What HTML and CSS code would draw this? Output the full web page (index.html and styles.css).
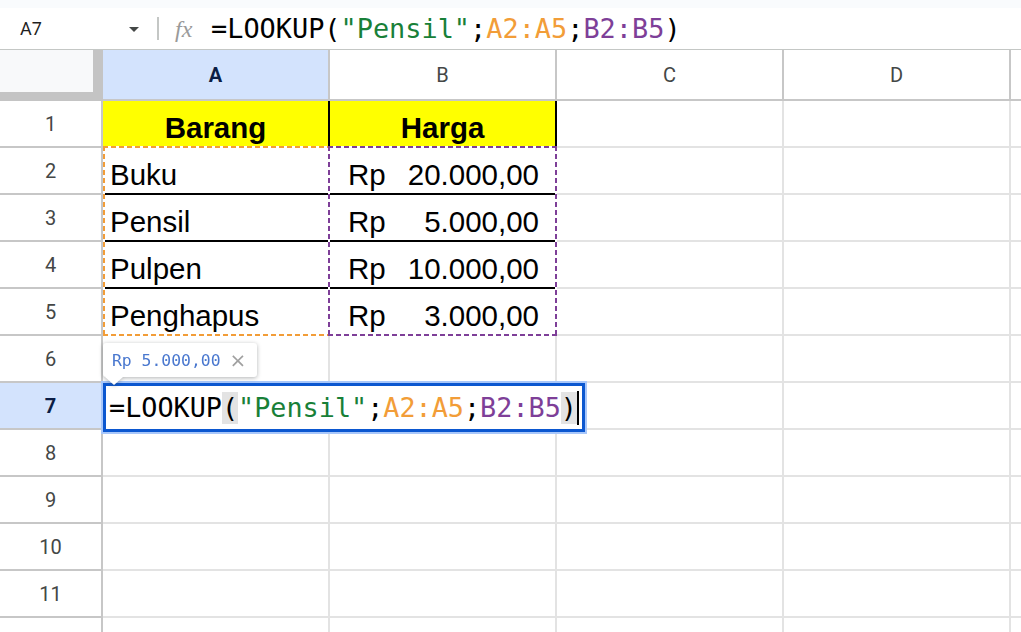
FILE: index.html
```html
<!DOCTYPE html>
<html lang="id">
<head>
<meta charset="utf-8">
<title>LOOKUP</title>
<link rel="stylesheet" href="styles.css">
</head>
<body>
<div class="topstrip"></div>
<div class="fbar">
  <div class="namebox">A7</div>
  <svg class="dd" width="12" height="6" viewBox="0 0 12 6"><path d="M1 0h10L6 5z" fill="#444746"/></svg>
  <div class="sep"></div>
  <span class="fx">fx</span>
  <div class="formula"><span>=LOOKUP(</span><span class="str">"Pensil"</span><span>;</span><span class="ra">A2:A5</span><span>;</span><span class="rb">B2:B5</span><span>)</span></div>
</div>
<div class="sheetwrap">
  <div class="sheet">
    <div class="corner"></div>
    <div class="ch sel">A</div><div class="ch">B</div><div class="ch">C</div><div class="ch">D</div><div class="ch"></div>

    <div class="rh">1</div><div class="c hd">Barang</div><div class="c hd">Harga</div><div class="c"></div><div class="c"></div><div class="c"></div>
    <div class="rh">2</div><div class="c tb">Buku</div><div class="c tb acc"><span>Rp</span><span>20.000,00</span></div><div class="c"></div><div class="c"></div><div class="c"></div>
    <div class="rh">3</div><div class="c tb">Pensil</div><div class="c tb acc"><span>Rp</span><span>5.000,00</span></div><div class="c"></div><div class="c"></div><div class="c"></div>
    <div class="rh">4</div><div class="c tb">Pulpen</div><div class="c tb acc"><span>Rp</span><span>10.000,00</span></div><div class="c"></div><div class="c"></div><div class="c"></div>
    <div class="rh">5</div><div class="c tb">Penghapus</div><div class="c tb acc"><span>Rp</span><span>3.000,00</span></div><div class="c"></div><div class="c"></div><div class="c"></div>
    <div class="rh">6</div><div class="c"></div><div class="c"></div><div class="c"></div><div class="c"></div><div class="c"></div>
    <div class="rh sel">7</div><div class="c"></div><div class="c"></div><div class="c"></div><div class="c"></div><div class="c"></div>
    <div class="rh">8</div><div class="c"></div><div class="c"></div><div class="c"></div><div class="c"></div><div class="c"></div>
    <div class="rh">9</div><div class="c"></div><div class="c"></div><div class="c"></div><div class="c"></div><div class="c"></div>
    <div class="rh">10</div><div class="c"></div><div class="c"></div><div class="c"></div><div class="c"></div><div class="c"></div>
    <div class="rh">11</div><div class="c"></div><div class="c"></div><div class="c"></div><div class="c"></div><div class="c"></div>
    <div class="rh"></div><div class="c"></div><div class="c"></div><div class="c"></div><div class="c"></div><div class="c"></div>
  </div>
  <div class="layer">
    <div class="rng rng-a"></div>
    <div class="rng rng-b"></div>
    <div class="editor"><span>=LOOKUP</span><span class="pm">(</span><span class="str">"Pensil"</span><span>;</span><span class="ra">A2:A5</span><span>;</span><span class="rb">B2:B5</span><span class="pm">)</span><span class="cur"></span></div>
    <div class="tip"><span class="tipval">Rp 5.000,00</span><span class="tipx">×</span></div>
  </div>
</div>
</body>
</html>
```
FILE: styles.css
```css
* { box-sizing: border-box; }
html, body { margin: 0; padding: 0; }
body {
  width: 1021px;
  height: 632px;
  overflow: hidden;
  background: #fff;
  font-family: Roboto, "Liberation Sans", sans-serif;
}
.topstrip { height: 8px; background: #f9fbfd; }
.fbar {
  height: 42px;
  border-bottom: 1px solid #c4c7c5;
  display: flex;
  align-items: center;
}
.namebox {
  width: 128px;
  padding-left: 20px;
  font-size: 18px;
  color: #1f1f1f;
}
.dd { display: block; margin-top: 2px; }
.sep {
  width: 2px;
  height: 23px;
  margin-left: 17px;
  background: #c4c7c5;
}
.fx {
  margin-left: 16px;
  width: 24px;
  font-family: "Liberation Serif", serif;
  font-style: italic;
  font-size: 24px;
  color: #9a9a9a;
  line-height: 1;
}
.formula {
  margin-left: 12px;
  font-family: "DejaVu Sans Mono", monospace;
  font-size: 26.9px;
  color: #000;
  white-space: nowrap;
}
.str { color: #188038; }
.ra { color: #f29d38; }
.rb { color: #7e3f98; }

.sheetwrap { display: grid; }
.sheet, .layer {
  grid-area: 1 / 1;
  display: grid;
  grid-template-columns: 103px repeat(4, 227px) 1fr;
  grid-template-rows: 51px repeat(12, 47px);
}
.layer { pointer-events: none; }

.corner {
  background: #f8f9fa;
  border-right: 10px solid #c4c4c4;
  border-bottom: 9px solid #c4c4c4;
}
.ch, .rh {
  display: flex;
  align-items: center;
  justify-content: center;
  font-size: 20px;
  color: #444746;
  border-right: 2px solid #c7c7c7;
  border-bottom: 2px solid #c7c7c7;
}
.ch.sel, .rh.sel {
  background: #d3e3fd;
  color: #0b1d45;
  font-weight: 700;
}
.c {
  display: flex;
  align-items: flex-end;
  padding: 0 7px 4px;
  font-family: "Liberation Sans", Arial, sans-serif;
  font-size: 29.5px;
  line-height: 29px;
  color: #000;
  white-space: nowrap;
  border-right: 2px solid #e3e3e3;
  border-bottom: 2px solid #e3e3e3;
}
.c.hd {
  background: #ffff00;
  font-weight: 700;
  justify-content: center;
  border-color: #000;
}
.c.tb { border-color: #000; }
.c.acc {
  justify-content: space-between;
  padding-left: 18px;
  padding-right: 16px;
}

.rng {
  grid-row: 3 / 7;
  margin-top: -2px;
  background:
    repeating-linear-gradient(90deg, var(--c) 0 5px, #fff 5px 8px) top / 100% 2px no-repeat,
    repeating-linear-gradient(90deg, var(--c) 0 5px, #fff 5px 8px) bottom / 100% 2px no-repeat,
    repeating-linear-gradient(180deg, var(--c) 0 5px, #fff 5px 8px) left / 2px 100% no-repeat,
    repeating-linear-gradient(180deg, var(--c) 0 5px, #fff 5px 8px) right / 2px 100% no-repeat;
}
.rng-a { grid-column: 2; --c: #f29d38; }
.rng-b { grid-column: 3; margin-left: -2px; --c: #7e3f98; }

.editor {
  grid-row: 8;
  grid-column: 2 / 5;
  justify-self: start;
  align-self: start;
  width: 482px;
  height: 49px;
  background: #fff;
  border: 3px solid #0b57d0;
  box-shadow: 0 0 0 2px #a8c7fa;
  display: flex;
  align-items: center;
  padding-left: 3px;
  font-family: "DejaVu Sans Mono", monospace;
  font-size: 26.8px;
  line-height: 32px;
  color: #000;
  white-space: nowrap;
}
.pm { background: #e3e3e3; }
.cur {
  display: inline-block;
  width: 2px;
  height: 34px;
  background: #000;
}
.tip {
  grid-row: 7;
  grid-column: 2 / 4;
  justify-self: start;
  align-self: start;
  margin-top: 7px;
  height: 34px;
  padding: 0 11px 0 9px;
  display: flex;
  align-items: center;
  gap: 9px;
  background: #fff;
  border-radius: 3px;
  position: relative;
  filter: drop-shadow(0 1px 2px rgba(60, 64, 67, 0.4));
}
.tip::after {
  content: "";
  position: absolute;
  left: 2px;
  top: 100%;
  width: 18px;
  height: 8px;
  background: #fff;
  clip-path: polygon(0 0, 100% 0, 50% 100%);
}
.tipval {
  font-family: "DejaVu Sans Mono", monospace;
  font-size: 16.4px;
  color: #4a78cf;
}
.tipx {
  font-family: "DejaVu Sans", sans-serif;
  font-size: 20px;
  color: #a0a0a0;
  line-height: 1;
}
```
